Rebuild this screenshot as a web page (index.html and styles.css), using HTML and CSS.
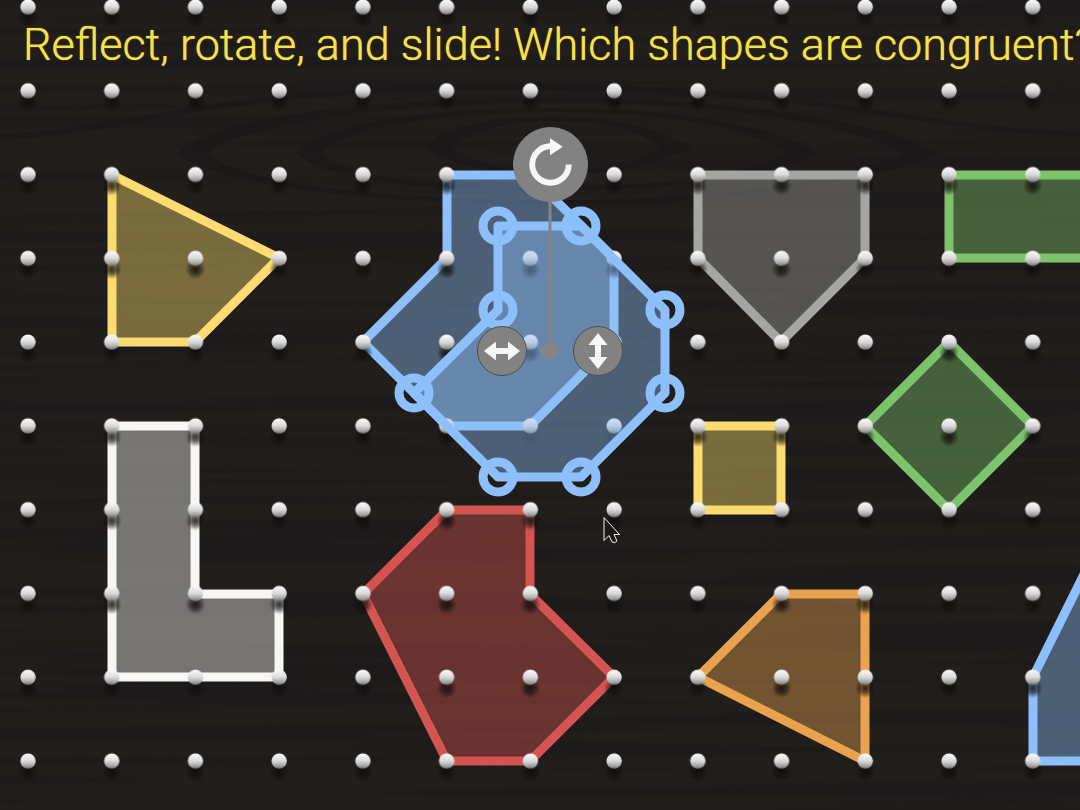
FILE: index.html
```html
<!DOCTYPE html>
<html lang="en">
<head>
<meta charset="utf-8">
<meta name="viewport" content="width=device-width, initial-scale=1">
<title>Geoboard</title>
<link rel="stylesheet" href="styles.css">
</head>
<body>
<main class="board">
  <svg class="canvas" role="img" aria-label="Pegboard with coloured shapes">
    <defs>
      <linearGradient id="peg-fill" x1="0" y1="0" x2="0" y2="1">
        <stop offset="0" stop-color="#fbfbfb"/>
        <stop offset="0.5" stop-color="#dadada"/>
        <stop offset="0.78" stop-color="#aaaaaa"/>
        <stop offset="1" stop-color="#707070"/>
      </linearGradient>
      <radialGradient id="peg-shadow">
        <stop offset="0" stop-color="#0f0e0c" stop-opacity="0.85"/>
        <stop offset="0.45" stop-color="#0f0e0c" stop-opacity="0.6"/>
        <stop offset="1" stop-color="#0f0e0c" stop-opacity="0"/>
      </radialGradient>
      <pattern id="pegs" x="-14" y="-35" width="83.73" height="83.78" patternUnits="userSpaceOnUse">
        <circle cx="42" cy="53" r="10" fill="url(#peg-shadow)"/>
        <circle cx="42" cy="42" r="7.7" fill="url(#peg-fill)"/>
      </pattern>
      <filter id="grain" x="0" y="0" width="100%" height="100%" color-interpolation-filters="sRGB">
        <feTurbulence type="fractalNoise" baseFrequency="0.0015 0.07" numOctaves="2" seed="8"/>
        <feColorMatrix values="0 0 0 0 0.106  0 0 0 0 0.094  0 0 0 0 0.106  5 0 0 0 -2.3"/>
      </filter>
    </defs>

    <rect width="100%" height="100%" fill="#211e1b"/>
    <rect width="100%" height="100%" filter="url(#grain)" opacity="0.6"/>
    <g class="knot">
      <path d="M0 134C110 128 175 104 300 94C470 78 650 82 790 98C900 112 980 128 1080 132V137C980 132 900 118 790 103C650 88 470 84 300 99C175 110 110 134 0 140Z"/>
      <path d="M176 154C220 112 390 98 560 98C740 98 890 122 938 154C860 188 700 204 560 204C390 204 230 190 176 154ZM206 154C250 187 400 200 560 200C700 200 840 185 904 154C850 124 730 103 560 103C390 103 240 124 206 154Z"/>
      <path d="M296 153C330 118 450 108 560 108C680 108 780 128 818 153C760 180 670 190 560 190C440 190 330 184 296 153ZM322 153C350 180 440 186 560 186C670 186 740 176 790 153C750 130 680 112 560 112C450 112 350 124 322 153Z"/>
      <path d="M424 147C450 122 510 116 560 117C620 118 660 130 692 147C650 168 610 174 560 174C500 174 450 168 424 147ZM452 147C470 164 510 170 560 170C610 170 640 164 660 147C640 132 610 121 560 121C510 121 470 130 452 147Z"/>
    </g>

    <g class="shapes">
      <polygon class="yellow" points="112,175 279,258 195,342 112,342"/>
      <polygon class="blue" points="447,175 530,175 614,258 614,342 530,426 447,426 363,342 447,258"/>
      <polygon class="gray" points="698,175 865,175 865,258 781,342 698,258"/>
      <polygon class="green" points="949,175 1116,175 1116,258 949,258"/>
      <polygon class="green" points="949,342 1033,426 949,510 865,426"/>
      <polygon class="yellow" points="698,426 781,426 781,510 698,510"/>
      <polygon class="white" points="112,426 195,426 195,594 279,594 279,677 112,677"/>
      <polygon class="red" points="447,510 530,510 530,594 614,677 530,761 447,761 363,594"/>
      <polygon class="orange" points="781,594 865,594 865,761 698,677"/>
      <polygon class="blue" points="1033,677 1116,510 1116,761 1033,761"/>
    </g>
    <rect width="100%" height="100%" fill="url(#pegs)"/>

    <g class="selection">
      <polygon class="blue" points="498,226 581,226 665,310 665,393 581,477 498,477 414,393 498,310"/>
      <g class="handles">
        <circle cx="498" cy="226" r="15"/>
        <circle cx="581" cy="226" r="15"/>
        <circle cx="665" cy="310" r="15"/>
        <circle cx="665" cy="393" r="15"/>
        <circle cx="581" cy="477" r="15"/>
        <circle cx="498" cy="477" r="15"/>
        <circle cx="414" cy="393" r="15"/>
        <circle cx="498" cy="310" r="15"/>
      </g>
      <path class="stem" d="M550 180V351"/>
      <circle class="pivot" cx="550" cy="351" r="9"/>
    </g>
    <path class="cursor" d="M604 517.500V540.500L609 535.500L612 542Q615 544 617 541L614 534.500H619.500Z"/>
  </svg>

  <h1 class="prompt">Reflect, rotate, and slide! Which shapes are congruent?</h1>

  <button class="tool rotate" type="button" aria-label="Rotate">
    <svg viewBox="0 0 74 74"><path class="arc" d="M55.500 37A18.500 18.500 0 1 1 37 18.500"/><path class="tip" d="M36.500 10.500L49.500 19L36.500 27.500Z"/></svg>
  </button>
  <button class="tool flip-x" type="button" aria-label="Flip horizontally">
    <svg viewBox="0 0 48 48"><path class="tip" d="M6 24L18 14.500V21H30V14.500L42 24L30 33.500V27H18V33.500Z"/></svg>
  </button>
  <button class="tool flip-y" type="button" aria-label="Flip vertically">
    <svg viewBox="0 0 48 48"><path class="tip" d="M24 6L33.500 18H27V30H33.500L24 42L14.500 30H21V18H14.500Z"/></svg>
  </button>
</main>
</body>
</html>
```

FILE: styles.css
```css
body {
  margin: 0;
  background: #211e1b;
}

.board {
  position: relative;
  display: grid;
  min-height: 100vh;
  overflow: hidden;
}

.canvas,
.prompt {
  grid-area: 1 / 1;
  min-width: 0;
}

.canvas {
  display: block;
  width: 100%;
  height: 100%;
}

.prompt {
  z-index: 1;
  margin: 0;
  padding: 21px 0 0 23px;
  color: #f6e148;
  font: 300 45px/48px Roboto, "Liberation Sans", sans-serif;
  text-shadow: 0 0 1px #f6e148;
  white-space: nowrap;
}

.knot {
  fill: #1b181a;
  fill-rule: evenodd;
  opacity: 0.8;
}

.shapes,
.selection {
  stroke-width: 9;
  stroke-linejoin: round;
  fill-opacity: 0.41;
}

.yellow { fill: #fbdc70; stroke: #fbdc70; }
.blue { fill: #8dbffa; stroke: #8dbffa; }
.gray { fill: #a5a5a3; stroke: #a5a5a3; }
.green { fill: #7dc36b; stroke: #7dc36b; }
.white { fill: #f6f6f4; stroke: #f6f6f4; }
.red { fill: #d35451; stroke: #d35451; }
.orange { fill: #e8a250; stroke: #e8a250; }

.handles {
  fill: none;
  stroke: #8dbffa;
  stroke-width: 9;
}

.stem {
  stroke: #858585;
  stroke-width: 3;
}

.pivot {
  fill: #858585;
  fill-opacity: 1;
  stroke: none;
}

.cursor {
  fill: #1b181a;
  stroke: #f4f4f4;
  stroke-width: 1;
}

.tool {
  position: absolute;
  z-index: 2;
  box-sizing: border-box;
  width: 50px;
  height: 50px;
  padding: 0;
  border: 1px solid #4c4c4c;
  border-radius: 50%;
  background: #828282;
}

.tool svg {
  display: block;
  width: 100%;
  height: 100%;
}

.rotate {
  left: 513px;
  top: 127px;
  width: 75px;
  height: 75px;
  border-color: #858585;
}

.flip-x { left: 477px; top: 326px; }
.flip-y { left: 573px; top: 326px; }

.tip { fill: #f7f7f5; }

.arc {
  fill: none;
  stroke: #f7f7f5;
  stroke-width: 6;
}
```
